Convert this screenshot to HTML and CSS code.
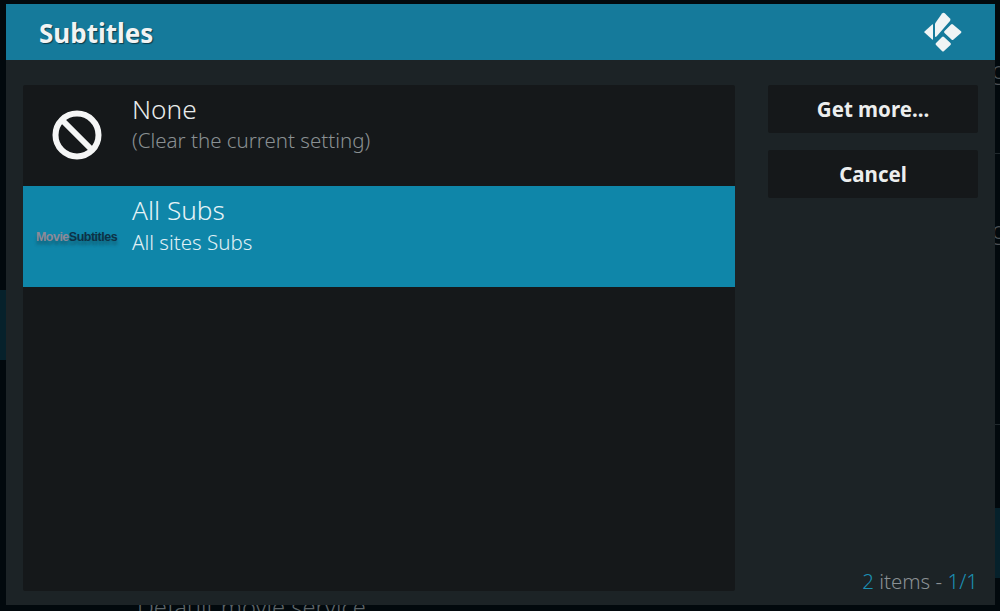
FILE: index.html
```html
<!DOCTYPE html>
<html lang="en">
<head>
    <meta charset="UTF-8">
    <meta name="viewport" content="width=device-width, initial-scale=1.0">
    <title>Subtitles</title>
    <link rel="stylesheet" href="styles.css">
</head>
<body>
    <div class="backdrop-band"></div>
    <div class="backdrop-band right"></div>
    <div class="backdrop-line line-a"></div>
    <div class="backdrop-line line-b"></div>
    <div class="backdrop-glyph glyph-a">g</div>
    <div class="backdrop-glyph glyph-b">g</div>
    <div class="backdrop-text">Default movie service</div>

    <div class="dialog">
        <header class="dialog-head">
            <h1>Subtitles</h1>
            <svg class="logo" viewBox="0 0 40 40" aria-hidden="true">
                <path d="M1.5 19.5 9.2 12.5Q10 12 10 13V27Q10 28 9.2 27.5L1.5 20.5Q1 20 1.5 19.5Z"/>
                <path d="M12 11.5 19 1.5Q20.3 0 21.8 1.2L27 6.5Q28 7.8 27 9L13.5 24.5Q12 25.5 12 24Z"/>
                <path d="M21.5 19 28 12.5Q29 11.5 30 12.5L38 19.2Q39 20 38 21L30.5 27.5Q29.5 28.5 28.5 27.5L21.5 21Q20.5 20 21.5 19Z"/>
                <path d="M13 31 19 25Q20 24 21 25L27.5 31Q28.5 32 27.5 33L21 39Q20 40 19 39L13 33Q12 32 13 31Z"/>
            </svg>
        </header>
        <div class="dialog-body">
            <main class="list">
                <div class="row">
                    <div class="row-icon">
                        <svg class="none-icon" viewBox="0 0 50 50" aria-hidden="true">
                            <circle cx="25" cy="25" r="21.5"/>
                            <line x1="10" y1="10" x2="40" y2="40"/>
                        </svg>
                    </div>
                    <div class="row-text">
                        <div class="row-title">None</div>
                        <div class="row-sub">(Clear the current setting)</div>
                    </div>
                </div>
                <div class="row selected">
                    <div class="row-icon">
                        <div class="addon-logo"><span class="movie">Movie</span><span class="subs">Subtitles</span></div>
                    </div>
                    <div class="row-text">
                        <div class="row-title">All Subs</div>
                        <div class="row-sub">All sites Subs</div>
                    </div>
                </div>
            </main>
            <aside class="side">
                <button class="side-btn">Get more...</button>
                <button class="side-btn">Cancel</button>
                <div class="count"><span class="accent">2</span> items - <span class="accent">1/1</span></div>
            </aside>
        </div>
    </div>
</body>
</html>
```

FILE: styles.css
```css
html, body { height: 100%; }
body { background-color: #02090d; color: white; font-family: "Noto Sans", sans-serif; margin: 0; padding: 4px 5px 6px 6px; box-sizing: border-box; overflow: hidden; position: relative; }

/* what shows of the page behind the dialog */
.backdrop-band { position: absolute; left: 0; top: 290px; width: 6px; height: 70px; background: #06212b; }
.backdrop-band.right { left: auto; right: 0; top: 508px; height: 70px; width: 5px; }
.backdrop-line { position: absolute; right: 0; width: 5px; height: 1px; background: #20282c; }
.line-a { top: 153px; }
.line-b { top: 424px; }
.backdrop-glyph { position: absolute; left: 992px; font-size: 24px; font-weight: 300; line-height: 24px; color: #4c5256; }
.glyph-a { top: 58px; }
.glyph-b { top: 218px; }
.backdrop-text { position: absolute; left: 137px; top: 591px; font-size: 23.7px; font-weight: 300; color: #5d6468; white-space: nowrap; }

.dialog { position: relative; height: 100%; display: flex; flex-direction: column; background: #1c2326; }
.dialog-head { height: 56px; flex: none; background: #157a9b; display: flex; align-items: center; justify-content: space-between; padding: 0 32px 0 33px; }
.dialog-head h1 { margin: 0; padding-top: 2px; font-size: 26px; font-weight: 700; line-height: 56px; color: #f1f3f3; text-shadow: 1px 1px 1px #0b3a4a; }
.logo { width: 40px; height: 40px; fill: #f0f4f5; }

.dialog-body { flex: 1; min-height: 0; display: flex; padding: 25px 17px 14px 17px; gap: 33px; }

.list { width: 712px; flex: none; background: #15181a; border-radius: 2px; }
.row { height: 100px; display: flex; }
.row-icon { width: 107px; margin-right: 2px; flex: none; display: flex; align-items: center; justify-content: center; }
.none-icon { width: 50px; height: 50px; fill: none; stroke: #f5f6f6; stroke-width: 6; }
.row-text { padding-top: 6px; }
.row-title { font-size: 26.2px; font-weight: 300; line-height: 36px; color: #e9ecec; }
.row-sub { font-size: 20.5px; font-weight: 300; line-height: 27px; color: #8a9093; }

.selected { height: 101px; background: #0f86a9; margin-top: 1px; }
.selected .row-title { color: #e6f3f7; }
.selected .row-sub { margin-top: 1px; color: #e0f0f5; }

.addon-logo { font-family: "Liberation Sans", sans-serif; font-size: 12.5px; letter-spacing: -0.5px; font-weight: 700; white-space: nowrap; text-shadow: 0 4px 3px rgba(20, 50, 60, 0.4); }
.movie { color: #8d8a98; }
.subs { color: #0d3246; }

.side { flex: 1; display: flex; flex-direction: column; gap: 17px; position: relative; }
.side-btn { height: 48px; border: 0; border-radius: 2px; background: #15181a; color: #eceeee; font-family: "Noto Sans", sans-serif; font-size: 20.5px; font-weight: 700; padding: 0 0 1px; }
.count { position: absolute; right: 0; bottom: -3px; font-size: 20.5px; font-weight: 300; line-height: 26px; color: #8a9093; }
.accent { color: #1b8fb3; }
```
